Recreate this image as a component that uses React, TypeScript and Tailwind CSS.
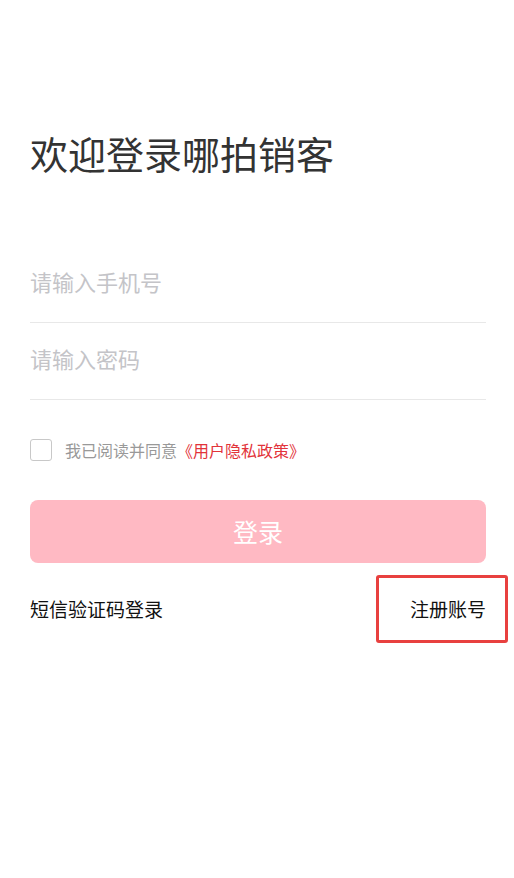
import React from "react";

const font = { fontFamily: '"Noto Sans CJK SC", "Noto Sans", sans-serif' };

export default function App() {
  return (
    <div className="min-h-[878px] w-full bg-white pl-[30px] pr-[28px]" style={font}>
      <h1 className="pt-[127px] text-[38px] leading-[52px] font-normal text-[#333333]">
        欢迎登录哪拍销客
      </h1>

      <div className="mt-[67px]">
        <div className="flex h-[77px] items-center border-b border-[#e8e8e8] pb-[5px]">
          <input
            className="w-full bg-transparent text-[22px] text-[#333] outline-none placeholder:text-[#c4c4c8]"
            placeholder="请输入手机号"
            style={font}
          />
        </div>
        <div className="flex h-[77px] items-center border-b border-[#e8e8e8] pb-[5px]">
          <input
            type="password"
            className="w-full bg-transparent text-[22px] text-[#333] outline-none placeholder:text-[#c4c4c8]"
            placeholder="请输入密码"
            style={font}
          />
        </div>
      </div>

      <div className="mt-[38px] flex h-[24px] items-center">
        <span className="h-[22px] w-[22px] rounded-[3px] border border-[#c8c8c8]" />
        <span className="ml-[13px] text-[16px] text-[#999999]">我已阅读并同意</span>
        <span className="text-[16px] text-[#e2333a]">《用户隐私政策》</span>
      </div>

      <button
        className="mt-[38px] flex h-[63px] w-full items-center justify-center rounded-[8px] bg-[#ffb9c3] text-[25px] text-white"
        style={font}
      >
        登录
      </button>

      <div className="mt-[12px] flex h-[68px] items-center justify-between">
        <span className="text-[19px] leading-[68px] text-[#111111]">短信验证码登录</span>
        <span className="relative text-[19px] leading-[68px] text-[#111111]">
          注册账号
          <span className="absolute top-0 bottom-0 left-[-34px] right-[-22px] rounded-[3px] border-[3px] border-[#e8403f]" />
        </span>
      </div>
    </div>
  );
}
